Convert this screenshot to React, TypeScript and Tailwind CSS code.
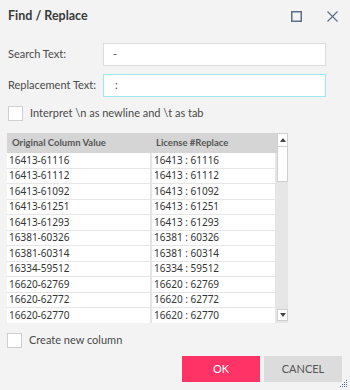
import React from "react";

const rows: [string, string][] = [
  ["16413-61116", "16413 : 61116"],
  ["16413-61112", "16413 : 61112"],
  ["16413-61092", "16413 : 61092"],
  ["16413-61251", "16413 : 61251"],
  ["16413-61293", "16413 : 61293"],
  ["16381-60326", "16381 : 60326"],
  ["16381-60314", "16381 : 60314"],
  ["16334-59512", "16334 : 59512"],
  ["16620-62769", "16620 : 62769"],
  ["16620-62772", "16620 : 62772"],
  ["16620-62770", "16620 : 62770"],
];

export default function App() {
  return (
    <div
      className="w-[350px] h-[390px] bg-[#f3f3f3] relative overflow-hidden text-[#4a4a4a]"
      style={{ fontFamily: 'Lato, "Noto Sans", sans-serif' }}
    >
      {/* Title bar */}
      <div className="h-[33px] flex items-center pl-[8px] pr-[12px]">
        <div className="text-[12.5px] font-bold text-[#3a3a3a] flex-1 leading-none">Find / Replace</div>
        <svg width="11" height="11" viewBox="0 0 11 11" className="mr-[25px]">
          <rect x="0.75" y="0.75" width="9.5" height="9.5" fill="none" stroke="#5b7088" strokeWidth="1.5" />
        </svg>
        <svg width="11" height="11" viewBox="0 0 11 11">
          <path d="M0.5 0.5L10.5 10.5M10.5 0.5L0.5 10.5" stroke="#5b7088" strokeWidth="1.2" />
        </svg>
      </div>

      {/* Search Text */}
      <div className="flex items-center h-[23px] mt-[10px] pl-[8px]">
        <div className="w-[95px] text-[11px]">Search Text:</div>
        <div className="w-[223px] h-[23px] bg-white border border-[#dcdcdc] flex items-center pl-[9px] text-[11px]">
          -
        </div>
      </div>

      {/* Replacement Text */}
      <div className="flex items-center h-[23px] mt-[8px] pl-[8px]">
        <div className="w-[95px] text-[11px]">Replacement Text:</div>
        <div className="w-[223px] h-[23px] bg-white border border-[#9ee8f5] flex items-center pl-[11px] text-[11px]">
          :
        </div>
      </div>

      {/* Interpret checkbox */}
      <div className="flex items-center mt-[9px] pl-[8px] h-[15px]">
        <div className="w-[15px] h-[15px] bg-white border border-[#cfcfcf]" />
        <div className="ml-[7px] text-[11px]">Interpret \n as newline and \t as tab</div>
      </div>

      {/* Table */}
      <div className="mt-[12px] ml-[7px] w-[281px] h-[190px] flex overflow-hidden">
        <div className="w-[270px] flex flex-col bg-[#e6e6e6]">
          <div className="h-[20px] flex bg-[#d5d5d5] text-[9.5px] font-bold text-[#555] shrink-0">
            <div className="w-[145px] pl-[5px] flex items-center">Original Column Value</div>
            <div className="flex-1 pl-[4px] flex items-center">License #Replace</div>
          </div>
          {rows.map(([a, b], i) => (
            <div
              key={i}
              className="h-[15.5px] flex shrink-0 border-b border-[#e6e6e6] text-[10px] text-[#333]"
              style={{ fontFamily: '"Noto Sans", sans-serif' }}
            >
              <div className="w-[143px] bg-white pl-[2px] flex items-center">{a}</div>
              <div className="w-[2px]" />
              <div className="w-[123px] bg-white pl-[2px] flex items-center">{b}</div>
            </div>
          ))}
        </div>
        <div className="w-[11px] h-[190px] bg-[#e6e6e6] flex flex-col">
          <div className="h-[14px] bg-white border border-[#cfcfcf] flex items-center justify-center">
            <svg width="6" height="4" viewBox="0 0 6 4"><path d="M3 0L6 4H0Z" fill="#444" /></svg>
          </div>
          <div className="h-[35px] bg-white border border-[#cfcfcf] border-t-0" />
          <div className="flex-1" />
          <div className="h-[12px] bg-white border border-[#cfcfcf] flex items-center justify-center mb-[2px]">
            <svg width="6" height="4" viewBox="0 0 6 4"><path d="M0 0H6L3 4Z" fill="#444" /></svg>
          </div>
        </div>
      </div>

      {/* Create new column */}
      <div className="flex items-center mt-[10px] pl-[7px] h-[15px]">
        <div className="w-[15px] h-[15px] bg-white border border-[#cfcfcf]" />
        <div className="ml-[7px] text-[11px]">Create new column</div>
      </div>

      {/* Buttons */}
      <div className="flex justify-end gap-[4px] pr-[8px] mt-[8px]">
        <div className="w-[78px] h-[26px] bg-[#ff3366] text-white text-[11px] flex items-center justify-center">
          OK
        </div>
        <div className="w-[78px] h-[26px] bg-[#dcdcdc] text-[#555] text-[11px] flex items-center justify-center">
          CANCEL
        </div>
      </div>

      {/* Resize grip */}
      <svg width="7" height="7" viewBox="0 0 7 7" className="absolute right-[3px] bottom-[3px]">
        {[
          [6, 0], [6, 2], [4, 2], [6, 4], [4, 4], [2, 4], [6, 6], [4, 6], [2, 6], [0, 6],
        ].map(([x, y], i) => (
          <rect key={i} x={x} y={y} width="1" height="1" fill="#4a6f9a" />
        ))}
      </svg>
    </div>
  );
}
